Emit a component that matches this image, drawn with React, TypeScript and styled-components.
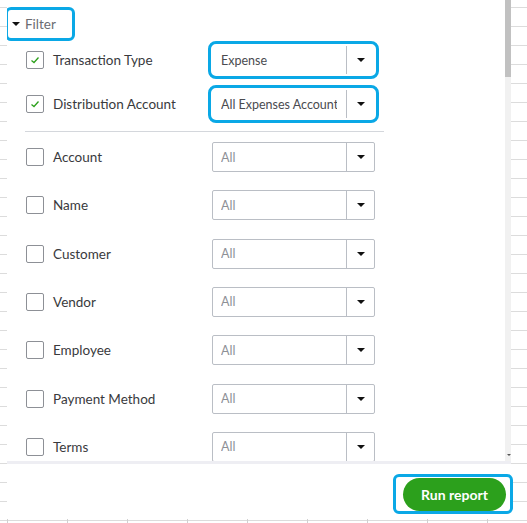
import React from "react";
import styled, { createGlobalStyle } from "styled-components";

const GlobalStyle = createGlobalStyle`
  html, body { margin: 0; padding: 0; background: #fff; }
  body { font-family: Lato, "Open Sans", Arial, sans-serif; }
  * { box-sizing: border-box; }
`;

const CYAN = "#0aa8e6";

const Page = styled.div`
  width: 527px;
  height: 523px;
  overflow: hidden;
  background-color: #fff;
  background-image: linear-gradient(to bottom, #dcdcdc 0 1px, transparent 1px);
  background-size: 100% 19px;
  background-position: 0 7px;
`;

const Panel = styled.div`
  margin-left: 7px;
  width: 504px;
  background: #fff;
  display: flex;
  flex-direction: column;
`;

const ScrollArea = styled.div`
  height: 461px;
  display: flex;
`;

const Content = styled.div`
  flex: 1;
  overflow: hidden;
  padding: 7px 0 0 0;
  display: flex;
  flex-direction: column;
`;

const Scrollbar = styled.div`
  width: 6px;
  display: flex;
  flex-direction: column;
  background: #f1f1f1;
  position: relative;
`;

const Thumb = styled.div`
  height: 77px;
  background: #c1c1c1;
`;

const ScrollArrow = styled.div`
  position: absolute;
  bottom: 5px;
  left: 2px;
  width: 0;
  height: 0;
  border-left: 2px solid transparent;
  border-right: 2px solid transparent;
  border-top: 2px solid #555;
`;

const FilterToggle = styled.div`
  align-self: flex-start;
  flex-shrink: 0;
  margin-left: -2px;
  height: 34px;
  width: 70px;
  border: 3px solid ${CYAN};
  border-radius: 6px;
  display: flex;
  align-items: center;
  gap: 5px;
  padding-left: 4px;
  font-size: 13.5px;
  color: #6b6c72;
`;

const Caret = styled.span<{ $size?: number }>`
  width: 0;
  height: 0;
  border-left: ${(p) => p.$size ?? 4}px solid transparent;
  border-right: ${(p) => p.$size ?? 4}px solid transparent;
  border-top: ${(p) => p.$size ?? 4}px solid #111;
`;

const Section = styled.div<{ $gap: number; $top: number }>`
  display: flex;
  flex-direction: column;
  flex-shrink: 0;
  gap: ${(p) => p.$gap}px;
  margin-top: ${(p) => p.$top}px;
`;

const Row = styled.div<{ $h: number }>`
  height: ${(p) => p.$h}px;
  display: flex;
  align-items: center;
  padding-left: 19px;
  flex-shrink: 0;
`;

const Box = styled.span`
  width: 18px;
  height: 18px;
  border: 1px solid #8d9096;
  border-radius: 2px;
  background: #fff;
  display: flex;
  align-items: center;
  justify-content: center;
  flex-shrink: 0;
`;

const Label = styled.span`
  width: 159px;
  margin-left: 9px;
  font-size: 13.5px;
  color: #393a3d;
  white-space: nowrap;
`;

const Select = styled.div<{ $highlight?: boolean }>`
  width: 163px;
  height: 30px;
  display: flex;
  border: 1px solid ${(p) => (p.$highlight ? "#fff" : "#babec5")};
  background: #fff;
  outline: ${(p) => (p.$highlight ? `3px solid ${CYAN}` : "none")};
  outline-offset: 1px;
  border-radius: ${(p) => (p.$highlight ? "4px" : "2px")};
`;

const SelectValue = styled.span<{ $muted?: boolean }>`
  flex: 1;
  overflow: hidden;
  white-space: nowrap;
  margin: 0 9px 0 8px;
  display: flex;
  align-items: center;
  font-size: 12.5px;
  color: ${(p) => (p.$muted ? "#8d9096" : "#4a4b50")};
`;

const SelectButton = styled.span`
  width: 28px;
  flex-shrink: 0;
  border-left: 1px solid #babec5;
  display: flex;
  align-items: center;
  justify-content: center;
`;

const Divider = styled.div`
  margin: 10px 0 10px 18px;
  width: 359px;
  height: 1px;
  background: #d4d7dc;
  flex-shrink: 0;
`;

const Separator = styled.div`
  height: 3px;
  background: #eeeef3;
`;

const Footer = styled.div`
  height: 55px;
  display: flex;
  justify-content: flex-end;
  align-items: flex-start;
  padding-top: 10px;
  margin-right: -2px;
`;

const ButtonRing = styled.div`
  border: 3px solid ${CYAN};
  border-radius: 6px;
  padding: 1px 4px 0 7px;
  display: flex;
`;

const RunButton = styled.button`
  width: 103px;
  height: 33px;
  border: none;
  border-radius: 17px;
  background: #2ca01c;
  color: #fff;
  font-family: Lato, "Open Sans", Arial, sans-serif;
  font-weight: 700;
  font-size: 14px;
  cursor: pointer;
`;

const Ruler = styled.div`
  height: 4px;
  background-image: linear-gradient(to right, #d0d0d0 0 1px, transparent 1px);
  background-size: 60px 100%;
  background-position: 7px 0;
`;

const Check = () => (
  <svg width="10" height="8" viewBox="0 0 10 8">
    <polyline points="1.5,4.5 4,6.5 8.5,1.5" fill="none" stroke="#2ca01c" strokeWidth="1.3" />
  </svg>
);

type Filter = { label: string; value: string; checked?: boolean; highlight?: boolean };

const primary: Filter[] = [
  { label: "Transaction Type", value: "Expense", checked: true, highlight: true },
  { label: "Distribution Account", value: "All Expenses Accounts", checked: true, highlight: true },
];

const others: Filter[] = [
  "Account",
  "Name",
  "Customer",
  "Vendor",
  "Employee",
  "Payment Method",
  "Terms",
].map((label) => ({ label, value: "All" }));

const FilterRow = ({ f, h }: { f: Filter; h: number }) => (
  <Row $h={h}>
    <Box>{f.checked && <Check />}</Box>
    <Label>{f.label}</Label>
    <Select $highlight={f.highlight}>
      <SelectValue $muted={!f.checked}>{f.value}</SelectValue>
      <SelectButton>
        <Caret />
      </SelectButton>
    </Select>
  </Row>
);

export default function App() {
  return (
    <>
      <GlobalStyle />
      <Page>
        <Panel>
          <ScrollArea>
            <Content>
              <FilterToggle>
                <Caret />
                Filter
              </FilterToggle>
              <Section $gap={10} $top={2}>
                {primary.map((f) => (
                  <FilterRow key={f.label} f={f} h={34} />
                ))}
              </Section>
              <Divider />
              <Section $gap={18.33} $top={0}>
                {others.map((f) => (
                  <FilterRow key={f.label} f={f} h={30} />
                ))}
              </Section>
            </Content>
            <Scrollbar>
              <Thumb />
              <ScrollArrow />
            </Scrollbar>
          </ScrollArea>
          <Separator />
          <Footer>
            <ButtonRing>
              <RunButton>Run report</RunButton>
            </ButtonRing>
          </Footer>
        </Panel>
        <Ruler />
      </Page>
    </>
  );
}
